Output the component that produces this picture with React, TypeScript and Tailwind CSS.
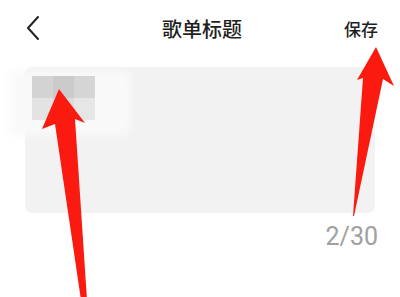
import React from 'react';

const cjk = { fontFamily: '"Noto Sans CJK SC", "Noto Sans", sans-serif' };

// censored title thumbnail (pixel mosaic)
const MOSAIC = ['#d3d3d3', '#cbcbcb', '#d5d5d5', '#e3e3e3', '#dcdcdc', '#e6e6e6'];

export default function App() {
    return (
        <div className="relative w-[400px] h-[297px] overflow-hidden bg-white">
            {/* Header */}
            <div className="grid grid-cols-[1fr_auto_1fr] items-center h-[57px] pl-[24px] pr-[22px]">
                <svg width="18" height="26" viewBox="0 0 18 26" fill="none" className="mt-[-2px]">
                    <polyline points="14,2 4,13 14,24" stroke="#222" strokeWidth="2" strokeLinecap="round" strokeLinejoin="round" />
                </svg>
                <div className="text-[20px] text-[#1f1f1f] font-medium pl-[2px]" style={cjk}>
                    歌单标题
                </div>
                <div className="flex justify-end">
                    <button className="text-[17px] text-[#1f1f1f] font-medium" style={cjk}>保存</button>
                </div>
            </div>

            {/* Title input */}
            <div className="relative mx-[25px] mt-[10px] h-[146px] rounded-[7px] bg-[#f2f2f2]">
                <div className="absolute left-[-15px] top-[4px] w-[120px] h-[64px] bg-[#f9f9f9] blur-[4px]" />
                <div className="relative grid grid-cols-3 w-[63px] pt-[9px] ml-[7px]">
                    {MOSAIC.map((c, i) => (
                        <div key={i} className="h-[22px]" style={{ backgroundColor: c }} />
                    ))}
                </div>
            </div>
            <div className="flex justify-end pr-[22px] mt-[11px]">
                <span className="text-[25px] leading-none text-[#a0a0a0]" style={{ fontFamily: 'Roboto, sans-serif' }}>2/30</span>
            </div>

            {/* Annotation arrows */}
            <svg className="absolute inset-0 pointer-events-none" width="400" height="297" viewBox="0 0 400 297">
                <polygon points="59,89 85,123 75,119 87,300 81,300 55,124 42,129" fill="#fa1a10" />
                <polygon points="376,47 394,86 383,79 354,216 353,216 363,78 357,80" fill="#fa1a10" />
            </svg>
        </div>
    );
}
